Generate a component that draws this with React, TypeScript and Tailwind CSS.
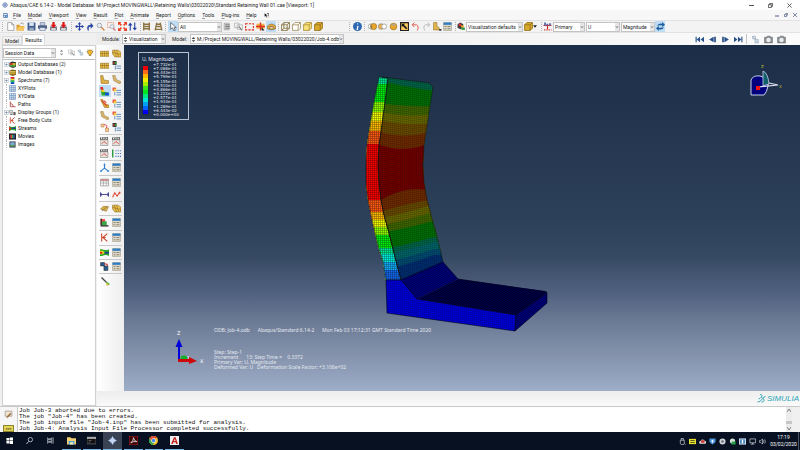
import type { ReactNode } from "react"

const icons: Record<string, ReactNode> = {
  app: <><circle cx="8" cy="8" r="6" fill="none" stroke="#5d77b0" strokeWidth="2" /><path d="M8 0l2 6 6 2-6 2-2 6-2-6-6-2 6-2z" fill="#7b93c4" /></>,
  doc: <><rect x="1" y="1" width="14" height="14" fill="#2f5f9e" /><path d="M3 3h10v4H3zM3 9h4v4H3z" fill="#dfe9f6" /><path d="M9 9h4v4H9z" fill="#5fb3e6" /></>,
  help: <><path d="M2 1v11l3-3 2 5 2-1-2-5h4z" fill="#111" /><path d="M10 4q0-3 3-3t3 3-3 4v2M13 12v2" fill="none" stroke="#111" strokeWidth="2" /></>,
  file: <path d="M3 1h7l4 4v10H3zM10 1v4h4" fill="#fff" stroke="#777" />,
  open: <><path d="M1 5h5l1 2h7v8H1z" fill="#d99a2b" /><path d="M4 8h12l-3 7H1z" fill="#f6c65b" /><path d="M8 3q4-3 6 1" fill="none" stroke="#555" /></>,
  save: <><path d="M1 1h14v14H1z" fill="#3f5f92" /><path d="M4 1h8v6H4z" fill="#dde5f0" /><path d="M4 10h8v5H4z" fill="#9aa9c0" /></>,
  print: <><path d="M4 1h8v5H4z" fill="#c9d3e2" stroke="#56688c" /><path d="M0 6h16v6H0z" fill="#4c5f85" /><path d="M3 10h10v5H3z" fill="#e6ecf4" stroke="#56688c" /></>,
  dbdown: <><path d="M2 8h12v7H2z" fill="#6a6f7b" /><path d="M4 11h8v3H4z" fill="#e8e8e8" /><path d="M6 0h4v5h3l-5 6-5-6h3z" fill="#e01515" /></>,
  move: <path d="M8 0l3 4H9v3h3V5l4 3-4 3V9H9v3h2l-3 4-3-4h2V9H4v2L0 8l4-3v2h3V4H5z" fill="#2743a0" />,
  rotate: <path d="M5 15Q1 6 10 5V1l5 6-5 5V8Q5 8 7 15z" fill="#2743a0" />,
  zoom: <><circle cx="6" cy="6" r="4" fill="#e7eef6" stroke="#9aa3ad" strokeWidth="1.5" /><path d="M9 9l6 6" stroke="#d68a4a" strokeWidth="2.5" /></>,
  zoombox: <><path d="M1 1h11v9H1z" fill="none" stroke="#e06030" strokeDasharray="2 1" /><circle cx="9" cy="8" r="3.5" fill="#e7eef6" stroke="#8a93a0" /><path d="M11 11l4 4" stroke="#c77" strokeWidth="2.5" /></>,
  fit: <path d="M0 0h6L4 2l3 3-2 2-3-3-2 2zM16 0v6l-2-2-3 3-2-2 3-3-2-2zM0 16v-6l2 2 3-3 2 2-3 3 2 2zM16 16h-6l2-2-3-3 2-2 3 3 2-2z" fill="#e8401e" />,
  updown: <path d="M4 1l4 5H5v9H3V6H0zM12 15l-4-5h3V1h2v9h3z" fill="#2743a0" />,
  persp: <path d="M3 1v14M13 1v14M3 4h10M3 8h10M3 12h10" stroke="#8b7442" strokeWidth="2.4" fill="none" />,
  taper: <path d="M5 1L2 15M11 1l3 14M5 4h6M4 8h8M3 13h10" stroke="#8b7442" strokeWidth="2.4" fill="none" />,
  cursor: <path d="M3 1v12l3-3 3 6 2-1-2-5h4z" fill="#fff" stroke="#222" />,
  list: <><path d="M2 2h9v12H2z" fill="#ccc" stroke="#999" /><path d="M4 5h8M4 8h8M4 11h8" stroke="#777" strokeWidth="1.5" /></>,
  link: <><path d="M1 2h8v8H1zM6 5h9v8H6z" fill="none" stroke="#999" /><path d="M9 8l5 7" stroke="#777" strokeWidth="2" /></>,
  dash: <path d="M1 3h14v11H1z" fill="none" stroke="#e0301e" strokeWidth="2" strokeDasharray="4 2" />,
  target: <><path d="M1 3h14v9H1z" fill="#f2b04a" /><path d="M0 8h16M8 1v14" stroke="#df2c1d" strokeWidth="2.5" /><path d="M10 9l5 6h-5z" fill="#222" /></>,
  cap: <><path d="M1 7q7-7 14 0v5q-7 4-14 0z" fill="#eaa73d" stroke="#7a5a22" /><path d="M5 8h6v5H5z" fill="#f4d08b" stroke="#555" /></>,
  wire: <path d="M1 5h10v10H1zM5 1h10v10H5zM1 5l4-4M11 5l4-4M11 15l4-4M1 15l4-4" fill="none" stroke="#7e6c35" strokeWidth="1.4" />,
  hidden: <path d="M1 5h10v10H1zM1 5l4-4h10v10l-4 4M11 5l4-4" fill="#fff" stroke="#9a8a55" strokeWidth="1.4" />,
  filled: <path d="M1 5h10v10H1zM1 5l4-4h10v10l-4 4M11 5l4-4" fill="#f8e27a" stroke="#a88a34" strokeWidth="1.4" />,
  shaded: <path d="M1 5h10v10H1zM1 5l4-4h10v10l-4 4M11 5l4-4" fill="#d9a92b" stroke="#8f6b16" strokeWidth="1.4" />,
  info: <><circle cx="8" cy="8" r="8" fill="#2f69b3" /><path d="M9 3.5h-1.5M9 7l-1.5 6H9" stroke="#fff" strokeWidth="2.2" fill="none" /></>,
  union: <><circle cx="5" cy="8" r="4.5" fill="#fff" stroke="#777" /><circle cx="10" cy="8" r="5.5" fill="#e8a527" stroke="#80601a" /><path d="M5 4q3 4 0 8" fill="#555" /></>,
  inter: <><circle cx="5.5" cy="8" r="5" fill="#e9b552" stroke="#777" /><circle cx="11" cy="8" r="4.5" fill="#fff" stroke="#777" /></>,
  ball: <><circle cx="8" cy="8" r="6" fill="#e8a527" stroke="#8d6c22" /><path d="M3 6q5-5 10 0" fill="#aaa" /></>,
  both: <><path d="M1 1h14v14H1z" fill="#f7c65e" stroke="#222" strokeWidth="2" /><path d="M3 3h6L7 5l6 6-2 2-6-6-2 2z" fill="#111" /></>,
  undo: <path d="M3 5h7q5 3 1 10M6 1L2 5l4 4" fill="none" stroke="#e0503c" strokeWidth="1.6" />,
  redo: <path d="M13 5H6q-5 3-1 10M10 1l4 4-4 4" fill="none" stroke="#b5b5b5" strokeWidth="1.6" />,
  stamp: <><path d="M1 1h6v7l4 2v4H1z" fill="#e3b84c" stroke="#8a6b20" /><path d="M11 14h4" stroke="#333" strokeWidth="3" /></>,
  table: <><path d="M1 1h14v14H1z" fill="#ddd6c4" stroke="#9a9484" /><path d="M1 1h14v4H1z" fill="#2b7cc4" /><path d="M3 7h3v2H3zM8 7h5v2H8zM3 11h3v2H3zM8 11h5v2H8z" fill="#8e887a" /></>,
  palette: <><path d="M1 4l5-3 5 3v6l-5 3-5-3z" fill="#3a3a3a" /><path d="M3 3h4v4H3z" fill="#e33" /><path d="M7 6h5v4H7z" fill="#f0a92a" /><path d="M8 10h6v4H8z" fill="#2d9a43" /></>,
  chart: <><path d="M1 6h14" stroke="#c22" strokeWidth="2" /><path d="M2 1h3v5H2zM6 3h3v3H6zM11 2h3v4h-3z" fill="#4d68a8" /><path d="M8 7v6M2 14h2M6 14h2M10 14h2M14 14h1" stroke="#c22" strokeWidth="2" /></>,
  sync: <path d="M2 7q2-6 9-4V0l5 5-5 4V6Q6 5 2 7zM14 9q-2 6-9 4v3l-5-5 5-4v3q5 1 9-1z" fill="#1d5f9e" />,
  first: <path d="M1 3h2v10H1zM9 3v10L3 8zM16 3v10l-6-5z" fill="#274f87" />,
  prev: <path d="M2 8l8-5v10zM11 3h3v10h-3z" fill="#274f87" />,
  next: <path d="M14 8L6 3v10zM2 3h3v10H2z" fill="#274f87" />,
  last: <path d="M0 3v10l6-5zM7 3v10l6-5zM13 3h2v10h-2z" fill="#274f87" />,
  step: <><path d="M3 2h5v5H3zM7 8h6v6H7z" fill="#dde6ee" stroke="#8fa2b6" /><path d="M2 2l11 12" stroke="#8fa2b6" /></>,
  camera: <><path d="M1 4h4l1-2h5l1 2h3v10H1z" fill="#8b8f94" stroke="#666" /><circle cx="8" cy="9" r="4" fill="#e8eef2" /></>,
  plus: <><rect x="2" y="2" width="12" height="12" fill="#fff" stroke="#9ab" strokeWidth="1.5" /><path d="M4 8h8M8 4v8" stroke="#357" strokeWidth="1.5" /></>,
  odb: <><path d="M1 4l6-3 9 2v10l-7 3-8-3z" fill="#333" /><path d="M2 5h6v4H2z" fill="#d33" /><path d="M8 5h7v4H8z" fill="#f2c22b" /><path d="M2 9h13v4H2z" fill="#4da53a" /></>,
  mdb: <><path d="M1 4l6-3 9 2v10l-7 3-8-3z" fill="#7b6220" /><path d="M2 5h13v3H2z" fill="#f4d25a" /><path d="M2 9h13v3H2z" fill="#caa02e" /></>,
  spectrum: <><path d="M4 0h8v16H4z" fill="#1642d8" /><path d="M4 0h8v4H4z" fill="#e22" /><path d="M4 4h8v4H4z" fill="#fd2" /><path d="M4 8h8v4H4z" fill="#2c4" /></>,
  xy: <><path d="M1 1h14v14H1z" fill="#d9e6f5" stroke="#456b9e" /><path d="M1 6h14M1 11h14M6 1v14M11 1v14" stroke="#456b9e" /></>,
  path: <path d="M3 1v12h12M3 5l5 3 2 5" fill="none" stroke="#b04848" strokeWidth="2" />,
  group: <><path d="M1 3h7v6H1z" fill="#ddd" stroke="#666" /><path d="M10 7h5v7h-5z" fill="#555" /><path d="M3 12h5" stroke="#222" strokeWidth="2" /></>,
  cut: <path d="M3 1v14M13 1L5 8l8 7M4 8h6" fill="none" stroke="#d0492e" strokeWidth="2" />,
  stream: <><path d="M0 2q8 5 16 0v12q-8-5-16 0z" fill="#2ea52c" /><path d="M0 4l6 4-6 4z" fill="#d22" /><path d="M6 6h10v3H6z" fill="#1d3f8e" /></>,
  flow: <><path d="M0 2h4q6 3 12 0v12q-6-3-12 0H0z" fill="#2ea52c" /><path d="M0 5h5l4 3-4 3H0z" fill="#e8d020" /><path d="M0 7h4v3H0z" fill="#d22" /><path d="M8 7h8v3H8z" fill="#1d3f8e" /></>,
  movie: <><path d="M0 1h16v14H0z" fill="#222" /><path d="M3 4h4v8H3z" fill="#d44" /><path d="M7 4h3v8H7z" fill="#4b4" /><path d="M10 4h3v8h-3z" fill="#36c" /></>,
  image: <><path d="M1 1h14v14H1z" fill="#343c4c" /><path d="M3 3h10v6H3z" fill="#7fb1d8" /><path d="M3 9h10v4H3z" fill="#59a263" /></>,
  bulb: <><path d="M8 2a4 4 0 012 8v3H6v-3a4 4 0 012-8z" fill="#f1b82d" stroke="#6c571f" /><path d="M1 5h2M13 5h2M3 1l1 1M13 1l-1 1" stroke="#6c571f" /></>,
  spin: <path d="M8 1l4 5H4zM8 15l4-5H4z" fill="#999" />,
  grip: <path d="M8 0l6 6H2zM8 16l6-6H2z" fill="#444" />,
  mesh: <><path d="M0 4h16v9H0z" fill="#eac04c" stroke="#8c6a1d" /><path d="M4 4v9M8 4v9M12 4v9M0 8h16" stroke="#8c6a1d" /></>,
  mesh2: <><path d="M1 2h10l5 4v8H5L1 9z" fill="#eac04c" stroke="#8c6a1d" /><path d="M4 2l4 12M8 2l4 12M1 6l15 4" stroke="#8c6a1d" /></>,
  shape: <path d="M1 1h4l2 8 8 1v5H2z" fill="#dfb045" stroke="#8c6a1d" />,
  shape2: <path d="M1 1l4-1 3 8 8 4-2 4-11-6z" fill="#d5b36a" stroke="#a08752" />,
  contour: <><path d="M1 0h4l2 8 9 2v5H3z" fill="#2aa52f" /><path d="M1 0h4l1 5H1z" fill="#e22" /><path d="M2 5h5l1 4H3z" fill="#fc2" /><path d="M9 10h7v5H9z" fill="#15d" /></>,
  opts: <><path d="M1 1h6v6H1z" fill="#e44" /><path d="M3 3h5v5H3z" fill="#ec4" /><path d="M5 9v6M8 6h8M8 10h8M8 14h8" stroke="#4d82b8" strokeWidth="1.5" fill="none" /></>,
  opts2: <><path d="M1 0h7v7H1z" fill="#333" /><path d="M2 2h3v3H2z" fill="#d33" /><path d="M5 2h3v3H5z" fill="#3a3" /><path d="M6 8v7M8 9h8M8 13h8" stroke="#4d82b8" strokeWidth="1.5" fill="none" /></>,
  vector: <><path d="M1 1h4l2 7 9 3v4H8z" fill="#dfa93a" stroke="#8c6a1d" /><path d="M3 3l9 9M7 3l4 4" stroke="#e0452c" strokeWidth="2" /></>,
  sketch: <><path d="M2 2h5v5H2zM10 9h5v6h-5z" fill="#f3d98d" stroke="#b3653a" /><path d="M7 3q8 0 4 6" fill="none" stroke="#d33" strokeWidth="1.5" /></>,
  clap: <><path d="M0 5h14v10H0z" fill="#e8e3dc" stroke="#777" /><path d="M0 1l14-1v5H0z" fill="#555" /><path d="M3 1v3M7 1v3M11 1v3" stroke="#eee" strokeWidth="2" /><path d="M3 12l4-4 5 4" fill="none" stroke="#d44" strokeWidth="1.6" /></>,
  dots: <><path d="M1 1v14" stroke="#2b9a44" strokeWidth="3" /><path d="M6 3h2M10 3h2M14 3h2M6 8h2M10 8h2M14 8h2M6 13h2M10 13h2M14 13h2" stroke="#3e77bf" strokeWidth="2" /></>,
  axes: <><path d="M8 2v7l-6 5M8 9l6 5" fill="none" stroke="#2f7fd0" strokeWidth="2" /><path d="M6 4l2-4 2 4zM0 16l1-4 3 3zM16 16l-1-4-3 3z" fill="#2f7fd0" /></>,
  grid: <><path d="M1 2h14v12H1z" fill="#fff" stroke="#777" /><path d="M1 5h14M6 2v12M11 2v12M1 9h14" stroke="#888" /><path d="M1 2h14v3H1z" fill="#c88" /></>,
  dist: <path d="M1 4v8M15 4v8M1 8h14M3 6L1 8l2 2M13 6l2 2-2 2" fill="none" stroke="#3a3a90" strokeWidth="1.6" />,
  plot: <path d="M1 13l4-8 4 6 5-8M14 3v4" fill="none" stroke="#e0452c" strokeWidth="1.8" />,
  cutplane: <><path d="M1 9l5-5 9 1-4 8z" fill="#dfb045" stroke="#8c6a1d" /><path d="M3 13l10-9" stroke="#555" /></>,
  xaxis: <><path d="M1 2h8v10H1z" fill="#e44" /><path d="M3 6h9v7H3z" fill="#3a4" /><path d="M2 1v13h13" fill="none" stroke="#222" strokeWidth="2" /></>,
  robot: <><path d="M1 1h7v6H1zM7 7h7v8H7z" fill="#275a8e" stroke="#333" /><path d="M8 3q6 0 5 4" fill="none" stroke="#c33" strokeWidth="2" /></>,
  brush: <><path d="M1 1l9 9" stroke="#444" strokeWidth="2.5" /><path d="M9 10l3-1 4 4-4 2z" fill="#5bbf4a" /><path d="M9 12h4v3h-3z" fill="#f2b630" /></>,
  note: <><path d="M2 2h12v9H2z" fill="#f1e6d2" stroke="#877" /><path d="M4 13l7-8 2 2-7 7z" fill="#9b6b3c" /></>,
  win: <path d="M1 2h6.500v6H1zM8.500 1H16v7H8.500zM1 9h6.500v6H1zM8.500 9H16v7H8.500z" fill="#fff" />,
  search: <><circle cx="10" cy="6" r="5" fill="none" stroke="#dfe3ea" strokeWidth="1.6" /><path d="M6 10l-5 6" stroke="#dfe3ea" strokeWidth="1.8" /></>,
  tasks: <path d="M1 1v3h10V1M1 15v-3h10v3M1 6h10v4H1zM14 1v14" fill="none" stroke="#d7dbe2" strokeWidth="1.5" />,
  folder: <><path d="M0 2h6l2 2h8v11H0z" fill="#f5d072" /><path d="M3 9h10v6H3z" fill="#3c9be0" /><path d="M5 11h6v4H5z" fill="#f9e7ae" /></>,
  cmd: <><path d="M0 2h16v12H0z" fill="#111" stroke="#888" /><path d="M0 2h16v3H0z" fill="#bbb" /><path d="M3 8h5M3 11h3" stroke="#999" /></>,
  abaqus: <><circle cx="8" cy="8" r="5.500" fill="#5672a8" /><path d="M8 0l2.500 5.500L16 8l-5.500 2.500L8 16l-2.500-5.500L0 8l5.500-2.500z" fill="#c8d5ef" /></>,
  pdf: <><path d="M0 0h16v16H0z" fill="#3a0606" stroke="#c3271f" strokeWidth="1.5" /><path d="M3 12q5-2 5-9 1 6 6 7-6-1-11 2z" fill="none" stroke="#fff" strokeWidth="1.3" /></>,
  chrome: <><circle cx="8" cy="8" r="8" fill="#f2c12e" /><path d="M1 4a8 8 0 0114 0H8L5 9z" fill="#dd4a3b" /><path d="M1 4l4 7 4 1-2 4A8 8 0 011 4z" fill="#30a253" /><circle cx="8" cy="8" r="4" fill="#fff" /><circle cx="8" cy="8" r="3" fill="#3f81ea" /></>,
  acad: <><path d="M0 0h16v16H0z" fill="#efefef" /><path d="M2 14L7 2h3l4 12h-3l-1-3H6l-1 3zM7 9h3L8.500 5z" fill="#c5221f" fillRule="evenodd" /></>,
  usb: <path d="M5 5V1h5v4M3 5h9v7l-2 3H5l-2-3zM12 13l3 2" fill="none" stroke="#dcdfe5" strokeWidth="1.5" />,
  gpu: <><path d="M0 2h16v12H0z" fill="#e8e22c" /><path d="M3 5h10v2H3zM3 9h10v2H3z" fill="#33361a" /></>,
  cloud: <><path d="M2 13a4 4 0 012-7 5 5 0 019 1 3 3 0 011 6z" fill="#e4e4e4" /><path d="M5 5h7l1 6H4z" fill="#c8372b" /></>,
  shield: <><path d="M1 1h14v7q-2 5-7 7-5-2-7-7z" fill="#4a94dd" /><path d="M8 4v7M5 7h6" stroke="#fff" strokeWidth="2" /></>,
  disc: <><circle cx="8" cy="8" r="7" fill="#cfd2d6" /><circle cx="8" cy="8" r="3" fill="#6c737c" /></>,
  check: <><circle cx="8" cy="7" r="6" fill="#dde2dd" /><path d="M6 8h9v7H6z" fill="#26a24a" /></>,
  panel: <><path d="M0 1h16v14H0z" fill="#dceaf7" /><path d="M2 3h12v10H2z" fill="#4b86bd" /><path d="M8 4v8" stroke="#fff" strokeWidth="3" /></>,
  net: <path d="M2 2h13v9H2zM8 11v3M4 14h8" fill="none" stroke="#dcdfe5" strokeWidth="1.5" />,
  sound: <path d="M1 6h3l4-4v12l-4-4H1zM10 5q2 3 0 6M13 3q3 5 0 10" fill="none" stroke="#dcdfe5" strokeWidth="1.4" />,
}

function Icon({ name, className = "size-[9px]" }: { name: string; className?: string }) {
  return (
    <svg viewBox="0 0 16 16" className={`shrink-0 ${className}`} aria-hidden="true">
      {icons[name]}
    </svg>
  )
}

function Tool({ name, active = false }: { name: string; active?: boolean }) {
  return (
    <button
      type="button"
      title={name}
      className={`flex h-[11px] w-[10px] items-center justify-center ${active ? "bg-[#bfdcf5]" : ""}`}
    >
      <Icon name={name} />
    </button>
  )
}

function Sep() {
  return <span className="h-[9px] w-0 shrink-0 border-l border-dotted border-[#b4b4b4]" />
}

function Combo({ label, value, className, handle = false }: { label: string; value: string; className: string; handle?: boolean }) {
  return (
    <div className={`flex h-[10px] shrink-0 items-center border border-[#c4c4c4] bg-white ${className}`}>
      {handle && <Icon name="grip" className="size-[5px]" />}
      <select aria-label={label} className="h-[8px] min-w-0 flex-1 appearance-none bg-transparent pl-px text-[5px] leading-[8px]">
        <option>{value}</option>
      </select>
      <svg viewBox="0 0 5 8" className="h-[8px] w-[4px] bg-[#e6e6e6]" aria-hidden="true">
        <path d="M1 3l1.500 2L4 3" fill="none" stroke="#555" strokeWidth="0.8" />
      </svg>
    </div>
  )
}

const menus = ["File", "Model", "Viewport", "View", "Result", "Plot", "Animate", "Report", "Options", "Tools", "Plug-ins", "Help"]

function TitleBar() {
  return (
    <header className="flex h-[10px] items-center bg-white pl-[2px]">
      <Icon name="app" className="size-[6px]" />
      <h1 className="ml-[2px] flex-1 whitespace-nowrap">
        Abaqus/CAE 6.14-2 - Model Database: M:\Project MOVINGWALL\Retaining Walls\03022020\Standard Retaining Wall 01.cae [Viewport: 1]
      </h1>
      <button type="button" title="Minimize" className="flex w-[19px] justify-center">
        <svg viewBox="0 0 6 6" className="size-[5px]"><path d="M0 3h6" stroke="#333" /></svg>
      </button>
      <button type="button" title="Restore" className="flex w-[19px] justify-center">
        <svg viewBox="0 0 6 6" className="size-[5px]"><path d="M0.500 2h3.500v3.500H0.500zM2 2V0.500h3.500V4H4" fill="none" stroke="#333" strokeWidth="0.900" /></svg>
      </button>
      <button type="button" title="Close" className="flex w-[19px] justify-center">
        <svg viewBox="0 0 6 6" className="size-[5px]"><path d="M0.500 0.500l5 5M5.500 0.500l-5 5" stroke="#333" strokeWidth="0.900" /></svg>
      </button>
      <span className="w-px" />
    </header>
  )
}

function MenuBar() {
  return (
    <nav className="flex h-[10px] items-center gap-[7px] bg-[#f7f7f7] pr-[3px] pl-[3px]">
      <Icon name="doc" className="-mr-[2px] size-[5px]" />
      {menus.map((m) => (
        <button key={m} type="button" className="whitespace-nowrap">
          <span className="underline decoration-[#999]">{m[0]}</span>
          {m.slice(1)}
        </button>
      ))}
      <Icon name="help" className="size-[5px]" />
      <div className="ml-auto flex gap-[5px] text-[#4a5f86]">
        <svg viewBox="0 0 4 4" className="size-[4px]"><path d="M0 3h4" stroke="currentColor" /></svg>
        <svg viewBox="0 0 4 4" className="size-[4px]"><path d="M0.500 1.500h2v2h-2zM1.500 0.500h2v2" fill="none" stroke="currentColor" strokeWidth="0.700" /></svg>
        <svg viewBox="0 0 4 4" className="size-[4px]"><path d="M0 0l4 4M4 0L0 4" stroke="currentColor" strokeWidth="0.700" /></svg>
      </div>
    </nav>
  )
}

function ToolGroup({ names, className, active }: { names: string[]; className: string; active?: string }) {
  return (
    <div className={`flex shrink-0 justify-between ${className}`}>
      {names.map((n, i) => (
        <Tool key={i} name={n} active={n === active} />
      ))}
    </div>
  )
}

function ToolBar() {
  return (
    <div className="flex h-[13px] items-center border-y border-[#e2e2e2] bg-[#f3f3f3] pl-[2px]">
      <Sep />
      <ToolGroup names={["file", "open", "save", "print", "dbdown", "dbdown"]} className="ml-[2px] w-[64px]" />
      <span className="w-[2px]" />
      <Sep />
      <ToolGroup names={["move", "rotate", "zoom", "zoombox", "fit", "updown"]} className="ml-[2px] w-[64px]" />
      <span className="w-[2px]" />
      <Sep />
      <ToolGroup names={["persp", "taper"]} className="w-[22px]" />
      <span className="w-[2px]" />
      <Sep />
      <span className="w-[2px]" />
      <Tool name="cursor" active />
      <Combo label="Selection filter" value="All" className="w-[44px]" />
      <ToolGroup names={["list", "link", "dash", "target", "cap"]} className="w-[54px]" active="cap" />
      <span className="w-[2px]" />
      <Sep />
      <ToolGroup names={["wire", "hidden", "filled", "shaded"]} className="ml-px w-[43px]" />
      <span className="w-[26px]" />
      <Sep />
      <span className="w-[2px]" />
      <Tool name="info" />
      <span className="w-[2px]" />
      <Sep />
      <ToolGroup names={["union", "inter", "ball", "both", "undo", "redo", "stamp", "table"]} className="ml-[2px] w-[86px]" />
      <span className="w-[2px]" />
      <Sep />
      <Tool name="palette" />
      <Combo label="Color code" value="Visualization defaults" className="w-[57px]" />
      <Tool name="shaded" />
      <svg viewBox="0 0 6 4" className="h-[3px] w-[4px]" aria-hidden="true"><path d="M0 0h6L3 4z" fill="#222" /></svg>
      <span className="w-[4px]" />
      <Sep />
      <Tool name="chart" />
      <Combo label="Variable type" value="Primary" className="ml-px w-[32px]" />
      <Combo label="Output variable" value="U" className="ml-px w-[34px]" />
      <Combo label="Invariant" value="Magnitude" className="ml-px w-[34px]" />
      <Tool name="sync" active />
    </div>
  )
}

function ContextBar() {
  return (
    <div className="flex h-[12px] items-center bg-gradient-to-r from-[#ececec] to-[#fbfbfb] pl-[5px]">
      <span className="w-[20px]">Module:</span>
      <Combo label="Module" value="Visualization" className="w-[44px]" handle />
      <span className="ml-[6px] w-[18px]">Model:</span>
      <Combo label="Model" value="M:/Project MOVINGWALL/Retaining Walls/03022020/Job-4.odb" className="w-[154px]" handle />
      <div className="ml-auto flex items-center gap-[3px] pr-[14px]">
        {["first", "prev", "next", "last"].map((n) => (
          <Tool key={n} name={n} />
        ))}
        <span className="h-[10px] border-l border-[#c4c4c4]" />
        {["step", "camera", "camera"].map((n, i) => (
          <Tool key={i} name={n} />
        ))}
      </div>
    </div>
  )
}

const tree = [
  { icon: "odb", label: "Output Databases (2)", open: true },
  { icon: "mdb", label: "Model Database (1)", open: true },
  { icon: "spectrum", label: "Spectrums (7)", open: true },
  { icon: "xy", label: "XYPlots" },
  { icon: "xy", label: "XYData" },
  { icon: "path", label: "Paths" },
  { icon: "group", label: "Display Groups (1)", open: true },
  { icon: "cut", label: "Free Body Cuts" },
  { icon: "stream", label: "Streams" },
  { icon: "movie", label: "Movies" },
  { icon: "image", label: "Images" },
]

function ResultsPanel() {
  return (
    <aside className="flex w-[97px] shrink-0 flex-col bg-[#f0f0f0] pr-px pl-[2px]">
      <div className="flex h-[12px] items-end">
        <button type="button" className="h-[9px] w-[20px] border border-[#dcdcdc] leading-[8px]">Model</button>
        <button type="button" className="h-[11px] w-[23px] border border-b-0 border-[#dcdcdc] bg-white leading-[9px]">Results</button>
      </div>
      <div className="flex flex-1 flex-col border border-[#d0d0d0] bg-white">
        <div className="flex h-[13px] items-center justify-between pr-px">
          <Combo label="Results source" value="Session Data" className="w-[53px]" />
          <Icon name="spin" className="size-[7px]" />
          <Icon name="link" className="size-[7px]" />
          <Icon name="step" className="size-[7px]" />
          <Icon name="bulb" className="size-[8px]" />
        </div>
        <ul className="flex-1 border-t border-[#bdbdbd]">
          {tree.map((t) => (
            <li key={t.label} className="flex h-[8px] items-center">
              <span className="flex w-[6px] justify-center">
                {t.open ? <Icon name="plus" className="size-[5px]" /> : <span className="h-[8px] border-l border-dotted border-[#bbb]" />}
              </span>
              <Icon name={t.icon} className="size-[7px]" />
              <span className="ml-[2px] whitespace-nowrap">{t.label}</span>
            </li>
          ))}
        </ul>
      </div>
    </aside>
  )
}

const toolbox = [
  { tools: ["mesh", "mesh2", "mesh", "opts2"] },
  { tools: ["shape", "shape2", "contour", "opts", "vector", "opts", "shape2", "opts", "sketch", "opts2"] },
  { tools: ["clap", "clap", "clap", "dots"] },
  { tools: ["axes", "table"], tall: true },
  { tools: ["grid", "table", "dist", "plot"] },
  { tools: ["cutplane", "mesh2"] },
  { tools: ["xaxis", "table"], tall: true },
  { tools: ["cut", "table"], tall: true },
  { tools: ["flow", "table"] },
  { tools: ["robot", "table"] },
]

function Toolbox() {
  return (
    <div className="w-[27px] shrink-0 bg-gradient-to-r from-white to-[#eeeeee] px-[2px] pt-[2px]">
      {toolbox.map((g, i) => (
        <div key={i} className={`grid grid-cols-2 border-b border-[#c8c8c8] ${g.tall ? "pb-[2px]" : "pb-px"}`}>
          {g.tools.map((t, j) => (
            <button key={j} type="button" title={t} className={`flex h-[12px] items-center justify-center ${t === "contour" ? "bg-[#bfdcf5]" : ""}`}>
              <Icon name={t} />
            </button>
          ))}
        </div>
      ))}
      <button type="button" title="brush" className="flex h-[14px] w-[12px] items-center justify-center">
        <Icon name="brush" />
      </button>
    </div>
  )
}

// top of each colour band: y on the side face, then left / middle / right y on the wide face
const bands = [
  { side: "#00e896", face: "#006b4c", y: 70, l: 60, m: 60, r: 60 },
  { side: "#00f010", face: "#007606", y: 84, l: 80, m: 87, r: 91 },
  { side: "#90ff00", face: "#426c00", y: 102, l: 103, m: 107, r: 106 },
  { side: "#f4ff00", face: "#6c6c00", y: 112, l: 111, m: 118, r: 114 },
  { side: "#ffbc00", face: "#6e4e00", y: 121, l: 119, m: 127, r: 123 },
  { side: "#ff5a14", face: "#742d00", y: 131, l: 131, m: 140, r: 131 },
  { side: "#ff0000", face: "#780000", y: 144, l: 143, m: 156, r: 141 },
  { side: "#ff5a14", face: "#742d00", y: 200, l: 203, m: 184, r: 191 },
  { side: "#ffbc00", face: "#6e4e00", y: 212, l: 213, m: 204, r: 199 },
  { side: "#f4ff00", face: "#6c6c00", y: 220, l: 219, m: 214, r: 204 },
  { side: "#90ff00", face: "#426c00", y: 227, l: 227, m: 221, r: 212 },
  { side: "#00f010", face: "#007606", y: 235, l: 234, m: 229, r: 221 },
  { side: "#00e896", face: "#006b4c", y: 248, l: 250, m: 246, r: 237 },
  { side: "#00ecdc", face: "#006a6e", y: 254, l: 256, m: 251, r: 242 },
  { side: "#14acf8", face: "#005078", y: 262, l: 264, m: 259, r: 249 },
  { side: "#1468f0", face: "#003078", y: 270, l: 272, m: 266, r: 255 },
]

const sidePath =
  "M379 77L388 78L385 102L381 132L379 145L378 165L379 183L381 200L384 215L389 233L393 249L396 261L401 280H386L383 261L379 249L375 233L371 215L368 200L366 183L366 165L367 145L369 132L374 102Z"
const facePath =
  "M388 78L382 77L429 83L433 87L430 106L426 132L424 145L423 165L424 183L427 200L431 215L436 233L440 249L443 262L401 280L396 261L393 249L389 233L384 215L381 200L379 183L378 165L379 145L381 132L385 102Z"

function Model() {
  return (
    <svg viewBox="124 45 676 346" preserveAspectRatio="xMidYMid meet" className="absolute inset-0 h-full w-full" aria-label="Deformed wall contour plot">
      <defs>
        <clipPath id="side"><path d={sidePath} /></clipPath>
        <clipPath id="face"><path d={facePath} /></clipPath>
        <pattern id="meshSide" width="2" height="2" patternUnits="userSpaceOnUse">
          <path d="M0 0.500h2M0.500 0v2" stroke="#000" strokeWidth="0.600" opacity="0.45" />
        </pattern>
        <pattern id="meshFace" width="2" height="2" patternUnits="userSpaceOnUse" patternTransform="skewY(8)">
          <path d="M0 0.500h2M0.500 0v2" stroke="#000" strokeWidth="0.500" opacity="0.4" />
        </pattern>
        <pattern id="meshFoot" width="2" height="2" patternUnits="userSpaceOnUse" patternTransform="skewY(-30)">
          <path d="M0 0.500h2" stroke="#000" strokeWidth="0.800" opacity="0.6" />
        </pattern>
      </defs>
      <g clipPath="url(#side)">
        {bands.map((b, i) => (
          <rect key={i} x="360" y={b.y} width="50" height={290 - b.y} fill={b.side} />
        ))}
      </g>
      <g clipPath="url(#face)">
        {bands.map((b, i) => (
          <path key={i} d={`M376 ${b.l}Q404 ${b.m} 434 ${b.r}L450 ${b.r}V300H370V${b.l}Z`} fill={b.face} />
        ))}
      </g>
      <path d={sidePath} fill="url(#meshSide)" stroke="#111" strokeWidth="0.500" strokeLinejoin="round" />
      <path d={facePath} fill="url(#meshFace)" stroke="#111" strokeWidth="0.500" strokeLinejoin="round" />
      <path d="M401 280L443 262L458 279L417 299Z" fill="#000088" />
      <path d="M417 299L458 279L545 291L547 293L516 315Z" fill="#00004c" />
      <path d="M401 280L443 262L458 279L547 292L516 315L417 299Z" fill="url(#meshFoot)" stroke="#00001c" strokeWidth="0.600" />
      <path d="M386 280H401L417 299L516 315L515 331L387 313Z" fill="#0000e8" />
      <path d="M386 280H401L417 299L516 315L515 331L387 313Z" fill="url(#meshFace)" stroke="#00001c" strokeWidth="0.600" />
      <path d="M516 315L547 293V303L515 331Z" fill="#000088" />
      <path d="M516 315L547 293V303L515 331Z" fill="url(#meshFoot)" stroke="#00001c" strokeWidth="0.600" />

      <path d="M178 360V345h2v15z" fill="#0000d8" />
      <path d="M175.500 347L179 339l3.500 8z" fill="#0000d8" />
      <ellipse cx="184" cy="358" rx="3.500" ry="2.500" fill="#12b024" />
      <path d="M178 359h11v-2l8 4-8 3v-2h-11z" fill="#cc0808" />

      <path d="M751 95V80q2-5 9-4 9 2 8 10-1 6-4 9z" fill="#00007c" stroke="#c9d0ea" />
      <path d="M763 86V71q5 2 6 13z" fill="#12606c" stroke="#c9d0ea" strokeWidth="0.800" />
      <path d="M758 87l20-2-9-2" fill="none" stroke="#dfe3f2" strokeWidth="1.200" />
      <rect x="756" y="86" width="4" height="4" fill="#f01414" />
      <g fill="#fff" fontSize="5" fontFamily="DejaVu Sans">
        <text x="177" y="335">Z</text>
        <text x="187" y="359" fontSize="4">Y</text>
        <text x="200" y="363">X</text>
      </g>
      <g fill="#c9c832" fontSize="4" fontFamily="DejaVu Sans">
        <text x="761" y="68">Z</text>
        <text x="779" y="88">X</text>
      </g>
    </svg>
  )
}

const legendColors = ["bg-[#f00000]", "bg-[#ff6a1a]", "bg-[#ffb400]", "bg-[#f2ee00]", "bg-[#a4f000]", "bg-[#3ce81c]", "bg-[#00e81c]", "bg-[#00e880]", "bg-[#00e4dc]", "bg-[#00a0f0]", "bg-[#0064ff]", "bg-[#0000f0]"]
const legendValues = ["+7.732e-01", "+7.088e-01", "+6.443e-01", "+5.799e-01", "+5.155e-01", "+4.510e-01", "+3.866e-01", "+3.222e-01", "+2.577e-01", "+1.933e-01", "+1.289e-01", "+6.443e-02", "+0.000e+00"]

function Viewport() {
  return (
    <main className="relative min-w-0 flex-1 bg-[linear-gradient(to_bottom,#1b2d47_0%,#2d4059_50%,#364962_61%,#516280_72%,#6c7b95_80%,#8593ad_90%,#9eadc8_100%)] font-['Noto_Sans',sans-serif] text-[5px] text-[#e4e8ef]">
      <Model />
      <section className="absolute top-[7px] left-[14px] w-[51px] border border-[#b9c2d0] px-[3px] pt-[3px] pb-[2px]">
        <h2 className="leading-[7px]">U, Magnitude</h2>
        <div className="flex gap-[4px]">
          <div className="my-[2px] flex h-[50px] w-[7px] flex-col border border-[#1c2c44]">
            {legendColors.map((c) => (
              <span key={c} className={`flex-1 ${c}`} />
            ))}
          </div>
          <ol className="flex h-[54px] flex-col justify-between font-['DejaVu_Sans',sans-serif] text-[4px] leading-[4px]">
            {legendValues.map((v) => (
              <li key={v}>{v}</li>
            ))}
          </ol>
        </div>
      </section>
      <p className="absolute bottom-[58px] left-[90px] leading-[6px] whitespace-pre">
        {"ODB: Job-4.odb      Abaqus/Standard 6.14-2      Mon Feb 03 17:12:31 GMT Standard Time 2020"}
      </p>
      <div className="absolute bottom-[21px] left-[90px] leading-[5px] whitespace-pre">
        <p>Step: Step-1</p>
        <p>{"Increment      13: Step Time =    0.3372"}</p>
        <p>Primary Var: U, Magnitude</p>
        <p>{"Deformed Var: U   Deformation Scale Factor: +3.106e+02"}</p>
      </div>
    </main>
  )
}

function MessageArea() {
  return (
    <section className="flex h-[26px] border-t border-[#c9c9c9] bg-[#f0f0f0]">
      <div className="flex w-[17px] flex-col items-center justify-between bg-[#f6f6f6] pt-[3px]">
        <Icon name="note" />
        <button type="button" className="h-[7px] w-[11px] overflow-hidden border border-[#8d8530] bg-[#e3d552] text-[4px] leading-[5px] font-bold">&gt;&gt;&gt;</button>
      </div>
      <div className="flex-1 overflow-hidden border-l border-[#c9c9c9] bg-white pt-px pl-px font-['Liberation_Mono',monospace] text-[6px] leading-[6px] whitespace-nowrap text-[#111]">
        <p>Job Job-3 aborted due to errors.</p>
        <p>The job "Job-4" has been created.</p>
        <p>The job input file "Job-4.inp" has been submitted for analysis.</p>
        <p>Job Job-4: Analysis Input File Processor completed successfully.</p>
      </div>
      <div className="mr-[8px] flex w-[6px] flex-col items-center justify-between bg-[#ececec] py-[2px]">
        <svg viewBox="0 0 4 3" className="h-[3px] w-[4px]"><path d="M0 3l2-3 2 3" fill="none" stroke="#555" strokeWidth="0.7" /></svg>
        <span className="mt-auto mb-[3px] h-[3px] w-[6px] bg-[#c6c6c6]" />
        <svg viewBox="0 0 4 3" className="h-[3px] w-[4px]"><path d="M0 0l2 3 2-3" fill="none" stroke="#555" strokeWidth="0.7" /></svg>
      </div>
    </section>
  )
}

const taskApps = ["win", "search", "tasks", "folder", "cmd", "abaqus", "pdf", "chrome", "acad"]
const tray = ["usb", "gpu", "cloud", "shield", "disc", "check", "panel", "net", "sound"]

function TaskBar() {
  return (
    <footer className="flex h-[18px] justify-between bg-[#071122] text-white">
      <div className="grid w-[184px] grid-cols-9 gap-[2px]">
        {taskApps.map((a, i) => (
          <button
            key={a}
            type="button"
            title={a}
            className={`flex items-center justify-center border-b ${a === "abaqus" ? "bg-[#3a4354]" : ""} ${i > 2 ? "border-[#76b5e8]" : "border-transparent"}`}
          >
            <Icon name={a} className={i < 3 ? "size-[7px]" : "size-[9px]"} />
          </button>
        ))}
      </div>
      <div className="flex items-center">
        {tray.map((t) => (
          <span key={t} className="flex w-[10px] justify-center">
            <Icon name={t} className="size-[7px]" />
          </span>
        ))}
        <time className="ml-[3px] flex w-[27px] flex-col text-center leading-[7px]">
          <span>17:19</span>
          <span>03/02/2020</span>
        </time>
        <span className="ml-px h-full w-[2px] border-l border-[#4a5364]" />
      </div>
    </footer>
  )
}

export default function App() {
  return (
    <div className="flex min-h-screen flex-col overflow-hidden bg-[#f0f0f0] font-['Roboto',sans-serif] text-[5px] leading-[7px] text-[#222]">
      <TitleBar />
      <MenuBar />
      <ToolBar />
      <div className="flex flex-1">
        <ResultsPanel />
        <div className="flex min-w-0 flex-1 flex-col">
          <ContextBar />
          <div className="flex flex-1">
            <Toolbox />
            <Viewport />
          </div>
          <div className="flex h-[15px] items-center justify-end gap-px bg-gradient-to-b from-[#ededed] to-[#fafafa] pr-px text-[#2ba3b6]">
            <svg viewBox="0 0 18 18" className="size-[9px]" aria-hidden="true">
              <path d="M6 1q6 0 3 5-2 3-6 4M9 6q5 3-2 8-3 2-6 2M17 5q-5 0-4 4 3 4-1 7H9" fill="none" stroke="currentColor" strokeWidth="1.800" />
            </svg>
            <span className="font-['Liberation_Sans',sans-serif] text-[8px] leading-[9px] italic">SIMULIA</span>
          </div>
        </div>
      </div>
      <MessageArea />
      <TaskBar />
    </div>
  )
}
